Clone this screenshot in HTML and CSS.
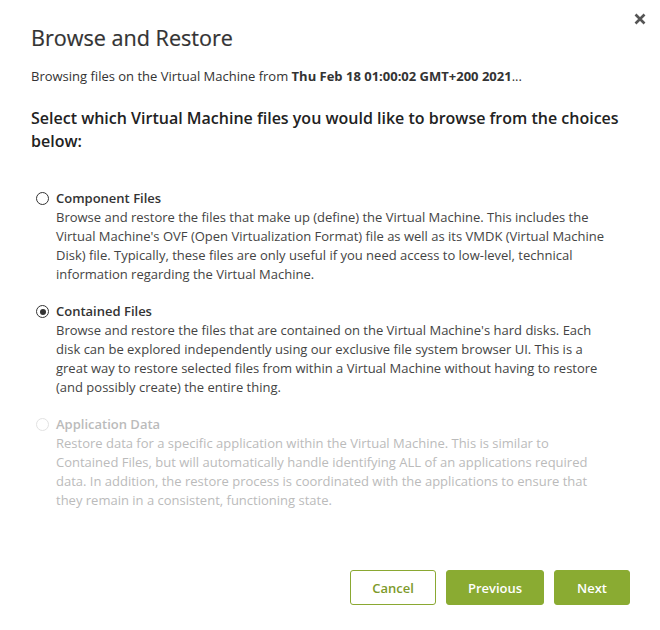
FILE: index.html
```html
<!DOCTYPE html>
<html>
<head>
<meta charset="utf-8">
<link rel="stylesheet" href="styles.css">
</head>
<body>
<div class="dialog">
  <button class="close" aria-label="Close">
    <svg width="12" height="12" viewBox="0 0 12 12"><path d="M1.5 1.5 L10.5 10.5 M10.5 1.5 L1.5 10.5" stroke="#555" stroke-width="2.6" stroke-linecap="butt"/></svg>
  </button>
  <h1 class="title">Browse and Restore</h1>
  <p class="subtitle">Browsing files on the Virtual Machine from <b>Thu Feb 18 01:00:02 GMT+200 2021</b>...</p>
  <h2 class="question">Select which Virtual Machine files you would like to browse from the choices below:</h2>
  <div class="options">
    <label class="option">
      <span class="radio"></span>
      <span class="body">
        <span class="label">Component Files</span>
        <span class="desc">Browse and restore the files that make up (define) the Virtual Machine. This includes the Virtual Machine's OVF (Open Virtualization Format) file as well as its VMDK (Virtual Machine Disk) file. Typically, these files are only useful if you need access to low-level, technical information regarding the Virtual Machine.</span>
      </span>
    </label>
    <label class="option">
      <span class="radio checked"></span>
      <span class="body">
        <span class="label">Contained Files</span>
        <span class="desc">Browse and restore the files that are contained on the Virtual Machine's hard disks. Each disk can be explored independently using our exclusive file system browser UI. This is a great way to restore selected files from within a Virtual Machine without having to restore (and possibly create) the entire thing.</span>
      </span>
    </label>
    <label class="option disabled">
      <span class="radio"></span>
      <span class="body">
        <span class="label">Application Data</span>
        <span class="desc">Restore data for a specific application within the Virtual Machine. This is similar to Contained Files, but will automatically handle identifying ALL of an applications required data. In addition, the restore process is coordinated with the applications to ensure that they remain in a consistent, functioning state.</span>
      </span>
    </label>
  </div>
  <div class="actions">
    <button class="btn btn-outline">Cancel</button>
    <button class="btn btn-primary prev">Previous</button>
    <button class="btn btn-primary next">Next</button>
  </div>
</div>
</body>
</html>
```

FILE: styles.css
```css
html, body {
  margin: 0;
  padding: 0;
  background: #fff;
}
body {
  font-family: "Open Sans", "Liberation Sans", sans-serif;
  color: #333;
  width: 660px;
  height: 630px;
  overflow: hidden;
}
.dialog {
  position: relative;
  padding: 24px 30px 0 31px;
  height: 630px;
  box-sizing: border-box;
  display: flex;
  flex-direction: column;
}
.close {
  position: absolute;
  top: 13px;
  right: 14px;
  border: 0;
  background: none;
  padding: 0;
  width: 12px;
  height: 12px;
  cursor: pointer;
}
.close svg { display: block; }
.title {
  margin: 0;
  font-size: 21.6px;
  font-weight: 400;
  line-height: 28px;
  color: #333;
  -webkit-text-stroke: 0.2px #333;
}
.subtitle {
  margin: 15px 0 0;
  font-size: 13px;
  line-height: 18px;
  color: #333;
}
.subtitle b { font-weight: 700; }
.question {
  margin: 22px 0 0;
  font-size: 16px;
  font-weight: 600;
  line-height: 23px;
  color: #222;
}
.options {
  margin-top: 36px;
  display: flex;
  flex-direction: column;
  gap: 18px;
}
.option {
  display: flex;
  gap: 7px;
  font-size: 13px;
  line-height: 19px;
  color: #333;
  max-width: 577px;
}
.radio {
  flex: none;
  width: 13px;
  height: 13px;
  border: 1px solid #333;
  border-radius: 50%;
  margin: 3px 0 0 5px;
  box-sizing: border-box;
  position: relative;
  background: #fff;
}
.radio.checked::after {
  content: "";
  position: absolute;
  left: 2.5px;
  top: 2.5px;
  width: 6px;
  height: 6px;
  border-radius: 50%;
  background: #333;
}
.body {
  display: flex;
  flex-direction: column;
}
.label {
  font-weight: 600;
}
.desc {
  color: #444;
}
.option.disabled .label,
.option.disabled .desc { color: #bbb; }
.option.disabled .radio { border-color: #e2e2e2; }
.actions {
  margin-top: auto;
  margin-bottom: 25px;
  display: flex;
  justify-content: flex-end;
  gap: 10px;
}
.btn {
  height: 35px;
  border-radius: 3px;
  font-family: "Open Sans", "Liberation Sans", sans-serif;
  font-size: 13px;
  font-weight: 600;
  padding: 0;
  cursor: pointer;
  box-sizing: border-box;
}
.btn-outline {
  width: 86px;
  background: #fff;
  border: 1px solid #8aa832;
  color: #7d9a2a;
}
.btn-primary {
  background: #8aab32;
  border: 1px solid #8aab32;
  color: #fff;
}
.prev { width: 98px; }
.next { width: 76px; }
```
